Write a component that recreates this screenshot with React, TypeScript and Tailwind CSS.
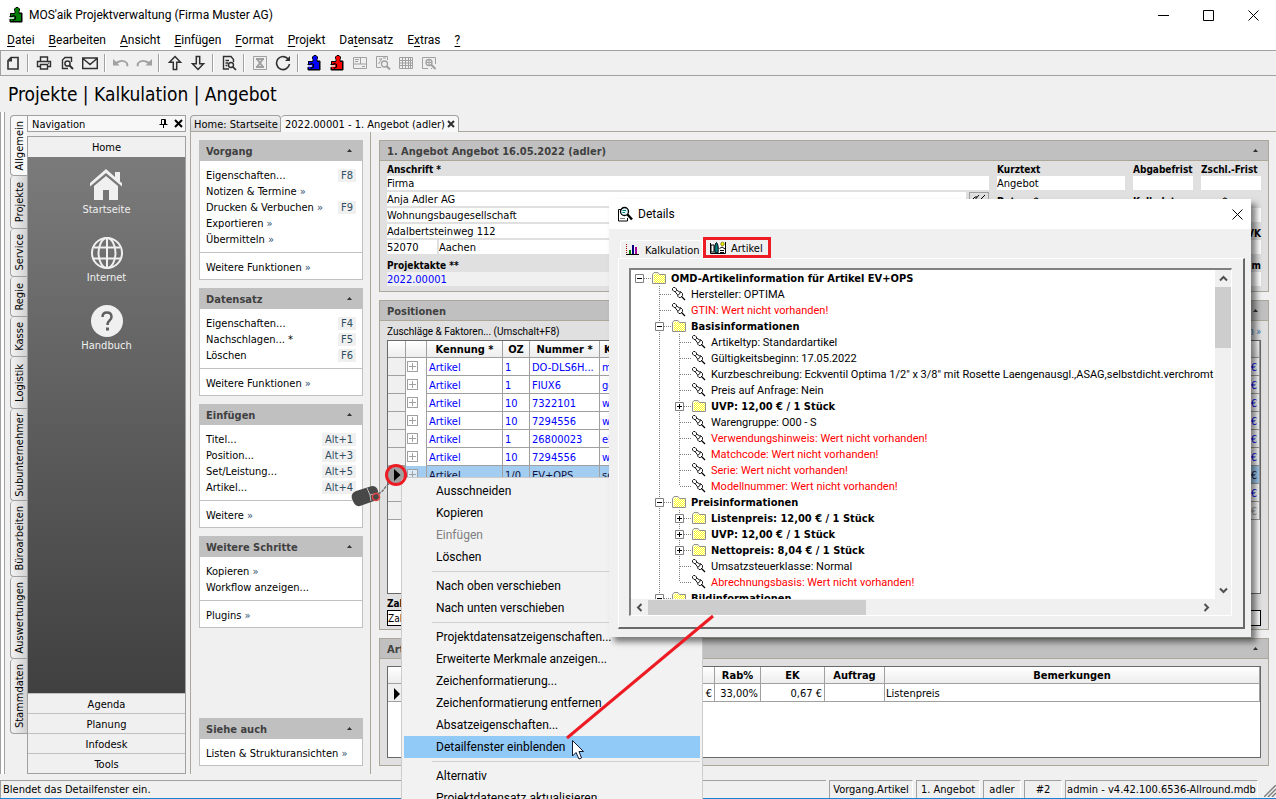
import type { ReactNode } from "react";

const menus = [
  ["", "D", "atei"],
  ["", "B", "earbeiten"],
  ["", "A", "nsicht"],
  ["", "E", "infügen"],
  ["", "F", "ormat"],
  ["", "P", "rojekt"],
  ["Da", "t", "ensatz"],
  ["E", "x", "tras"],
  ["", "?", ""],
];

const sideTabs = [
  { name: "Allgemein", size: "h-[61px]" },
  { name: "Projekte", size: "h-[53px]" },
  { name: "Service", size: "h-[48px]" },
  { name: "Regie", size: "h-[40px]" },
  { name: "Kasse", size: "h-[40px]" },
  { name: "Logistik", size: "h-[52px]" },
  { name: "Subunternehmer", size: "h-[92px]" },
  { name: "Büroarbeiten", size: "h-[76px]" },
  { name: "Auswertungen", size: "h-[82px]" },
  { name: "Stammdaten", size: "h-[75px]" },
];

type Task = { text: string; more?: boolean; hotkey?: string };

const taskGroups: { title: string; items: Task[]; footer?: string }[] = [
  {
    title: "Vorgang",
    items: [
      { text: "Eigenschaften...", hotkey: "F8" },
      { text: "Notizen & Termine", more: true },
      { text: "Drucken & Verbuchen", more: true, hotkey: "F9" },
      { text: "Exportieren", more: true },
      { text: "Übermitteln", more: true },
    ],
    footer: "Weitere Funktionen",
  },
  {
    title: "Datensatz",
    items: [
      { text: "Eigenschaften...", hotkey: "F4" },
      { text: "Nachschlagen... *", hotkey: "F5" },
      { text: "Löschen", hotkey: "F6" },
    ],
    footer: "Weitere Funktionen",
  },
  {
    title: "Einfügen",
    items: [
      { text: "Titel...", hotkey: "Alt+1" },
      { text: "Position...", hotkey: "Alt+3" },
      { text: "Set/Leistung...", hotkey: "Alt+5" },
      { text: "Artikel...", hotkey: "Alt+4" },
    ],
    footer: "Weitere",
  },
  {
    title: "Weitere Schritte",
    items: [{ text: "Kopieren", more: true }, { text: "Workflow anzeigen..." }],
    footer: "Plugins",
  },
];

const positions = [
  { kind: "Artikel", oz: "1", nr: "DO-DLS6H...", text: "mit Rahmen" },
  { kind: "Artikel", oz: "1", nr: "FIUX6", text: "geräuscharm" },
  { kind: "Artikel", oz: "10", nr: "7322101", text: "weiß" },
  { kind: "Artikel", oz: "10", nr: "7294556", text: "weiß" },
  { kind: "Artikel", oz: "1", nr: "26800023", text: "elektrisch" },
  { kind: "Artikel", oz: "10", nr: "7294556", text: "weiß" },
  { kind: "Artikel", oz: "1/0", nr: "EV+OPS", text: "schwarz", selected: true },
  {},
  { empty: true },
];

const contextMenu = [
  ["Ausschneiden", "Kopieren", "Einfügen", "Löschen"],
  ["Nach oben verschieben", "Nach unten verschieben"],
  [
    "Projektdatensatzeigenschaften...",
    "Erweiterte Merkmale anzeigen...",
    "Zeichenformatierung...",
    "Zeichenformatierung entfernen",
    "Absatzeigenschaften...",
    "Detailfenster einblenden",
  ],
  ["Alternativ", "Projektdatensatz aktualisieren"],
];

type Node = {
  depth: number;
  text: string;
  box?: "open" | "closed";
  missing?: boolean;
  last?: boolean;
};

const tree: Node[] = [
  { depth: 0, text: "OMD-Artikelinformation für Artikel EV+OPS", box: "open" },
  { depth: 1, text: "Hersteller: OPTIMA" },
  { depth: 1, text: "GTIN: Wert nicht vorhanden!", missing: true },
  { depth: 1, text: "Basisinformationen", box: "open" },
  { depth: 2, text: "Artikeltyp: Standardartikel" },
  { depth: 2, text: "Gültigkeitsbeginn: 17.05.2022" },
  { depth: 2, text: 'Kurzbeschreibung: Eckventil Optima 1/2" x 3/8" mit Rosette Laengenausgl.,ASAG,selbstdicht.verchromt' },
  { depth: 2, text: "Preis auf Anfrage: Nein" },
  { depth: 2, text: "UVP: 12,00 € / 1 Stück", box: "closed" },
  { depth: 2, text: "Warengruppe: O00 - S" },
  { depth: 2, text: "Verwendungshinweis: Wert nicht vorhanden!", missing: true },
  { depth: 2, text: "Matchcode: Wert nicht vorhanden!", missing: true },
  { depth: 2, text: "Serie: Wert nicht vorhanden!", missing: true },
  { depth: 2, text: "Modellnummer: Wert nicht vorhanden!", missing: true, last: true },
  { depth: 1, text: "Preisinformationen", box: "open" },
  { depth: 2, text: "Listenpreis: 12,00 € / 1 Stück", box: "closed" },
  { depth: 2, text: "UVP: 12,00 € / 1 Stück", box: "closed" },
  { depth: 2, text: "Nettopreis: 8,04 € / 1 Stück", box: "closed" },
  { depth: 2, text: "Umsatzsteuerklasse: Normal" },
  { depth: 2, text: "Abrechnungsbasis: Wert nicht vorhanden!", missing: true, last: true },
  { depth: 1, text: "Bildinformationen", box: "open" },
];

function Icon({ children, className = "size-4" }: { children: ReactNode; className?: string }) {
  return (
    <svg viewBox="0 0 16 16" fill="none" stroke="currentColor" className={`${className} shrink-0`}>
      {children}
    </svg>
  );
}

function Puzzle({ color }: { color: string }) {
  return (
    <Icon>
      <path d="M7 6V4.500L6.500 3.500V2L8 .5H10L11.500 2V3.500L11 4.500V6H14V15H2V12" fill={color} stroke="#000" />
      <path d="M2 6H14V15H2Z" fill={color} stroke="none" />
      <path d="M7 6.500H2.500V9M11 6.500H13.500V14.500H2.500V12.500" stroke="#000" />
      <path d="M1.500 9.500H4.500L5.500 8.500L7.500 9.500V12L5.500 13L4.500 12.500" stroke="#000" strokeWidth="1.200" />
      <path d="M1 11H6" stroke="#f0f0f0" strokeWidth="1.500" />
    </Icon>
  );
}

const toolIcons: Record<string, ReactNode> = {
  Neu: (
    <Icon>
      <path d="M6 2.500H13V14H3V5.500Z" strokeWidth="1.600" />
      <path d="M3 6.500L7 2.500V6.500Z" fill="currentColor" stroke="none" />
    </Icon>
  ),
  Drucken: (
    <Icon>
      <path d="M4.500 6V2H11.500V6M4.500 11.500H1.500V6.500H14.500V11.500H11.500M4.500 9.500H11.500V14H4.500Z" strokeWidth="1.400" />
      <path d="M12 8.200H13.200" />
    </Icon>
  ),
  Seitenansicht: (
    <Icon>
      <path d="M12.500 7V2.500H6L3.500 5V13.500H9" strokeWidth="1.400" />
      <circle cx="8.500" cy="8.500" r="2.600" strokeWidth="1.500" />
      <path d="M10.500 10.500L14 14" strokeWidth="2" />
    </Icon>
  ),
  Senden: (
    <Icon>
      <path d="M.7 3H15.300V13.500H.7ZM1 3.500L8 9.500L15 3.500" strokeWidth="1.500" />
    </Icon>
  ),
  Rückgängig: (
    <Icon>
      <path d="M0 4V10.500H6.500L4.500 8.500Q9 5 13 8.200L13.500 11.500L15.500 11L15 8Q10.500 2.500 3 6.800Z" fill="currentColor" stroke="none" />
    </Icon>
  ),
  Wiederholen: (
    <Icon>
      <path d="M16 4V10.500H9.500L11.500 8.500Q7 5 3 8.200L2.500 11.500L.5 11L1 8Q5.500 2.500 13 6.800Z" fill="currentColor" stroke="none" />
    </Icon>
  ),
  "Nach oben": (
    <Icon>
      <path d="M8 1.500L13.500 7.200H9.700V14.500H6.300V7.200H2.500Z" strokeWidth="1.500" />
    </Icon>
  ),
  "Nach unten": (
    <Icon>
      <path d="M8 14.500L13.500 8.800H9.700V1.500H6.300V8.800H2.500Z" strokeWidth="1.500" />
    </Icon>
  ),
  Suchen: (
    <Icon>
      <path d="M12.500 7V4.500L10 1.500H2.500V14H8M4.500 5.500H8M4.500 8H7M4.500 10.500H6.500" strokeWidth="1.400" />
      <circle cx="10" cy="10" r="2.500" strokeWidth="1.400" />
      <path d="M11.800 11.800L15 15" strokeWidth="1.700" />
    </Icon>
  ),
  Abbrechen: (
    <Icon>
      <path d="M1.500 1.500H14.500V14.500H1.500Z" />
      <path d="M4 4H12M4 12H12M5 4L11 12M11 4L5 12" strokeWidth="2" />
    </Icon>
  ),
  Aktualisieren: (
    <Icon>
      <path d="M13.500 4.500A6.500 6.500 0 1 0 14.500 9" strokeWidth="1.600" />
      <path d="M15 1V6H10Z" fill="currentColor" stroke="none" />
    </Icon>
  ),
  Stammdaten: <Puzzle color="#0000ff" />,
  Positionen: <Puzzle color="#ff0000" />,
  Formular: (
    <Icon>
      <path d="M1.500 2.500H14.500V13.500H1.500ZM1.500 9H14.500M8.500 2.500V9M3 4.500H7M3 6.500H6M10 11.500H13" />
    </Icon>
  ),
  Auswerten: (
    <Icon>
      <path d="M12.500 5V1.500H1.500V12.500H6M3.500 9L7 3.500M4 4H7M8 3H11" />
      <circle cx="9.500" cy="9" r="3" strokeWidth="1.300" />
      <path d="M11.700 11.200L15 14.500" strokeWidth="2" />
    </Icon>
  ),
  Tabelle: (
    <Icon>
      <path d="M1.500 2.500H14.500V13.500H1.500ZM1.500 5.500H14.500M1.500 8H14.500M1.500 10.500H14.500M4.500 2.500V13.500M7.500 2.500V13.500M10.500 2.500V13.500M12.500 2.500V13.500" />
    </Icon>
  ),
  Vorschau: (
    <Icon>
      <path d="M14.500 9V2.500H1.500V13.500H7M10 13.500H11" />
      <circle cx="8" cy="7.500" r="3" strokeWidth="1.300" />
      <path d="M8 5V10M5.500 7.500H10.500" />
      <path d="M10.200 9.700L14.500 14" strokeWidth="2" />
    </Icon>
  ),
};

const toolbar = [
  ["Neu"],
  ["Drucken", "Seitenansicht", "Senden"],
  ["Rückgängig", "Wiederholen"],
  ["Nach oben", "Nach unten"],
  ["Suchen"],
  ["Abbrechen", "Aktualisieren"],
  ["Stammdaten", "Positionen", "Formular", "Auswerten", "Tabelle", "Vorschau"],
];

const disabledTools = ["Rückgängig", "Wiederholen", "Abbrechen", "Formular", "Auswerten", "Tabelle", "Vorschau"];

function TitleBar() {
  return (
    <header className="flex h-[30px] shrink-0 items-center bg-white pl-2 font-[Roboto,sans-serif] text-[12px]">
      <Puzzle color="#008000" />
      <h1 className="ml-[5px]">MOS'aik Projektverwaltung (Firma Muster AG)</h1>
      <div className="ml-auto flex">
        <button aria-label="Minimieren" className="flex w-[45px] justify-center">
          <svg viewBox="0 0 11 11" className="size-[11px]" stroke="#000"><path d="M0 5.500H11" /></svg>
        </button>
        <button aria-label="Maximieren" className="flex w-[45px] justify-center">
          <svg viewBox="0 0 11 11" className="size-[11px]" stroke="#000" fill="none"><path d="M.5 .5H10.500V10.500H.5Z" /></svg>
        </button>
        <button aria-label="Schließen" className="flex w-[45px] justify-center">
          <svg viewBox="0 0 11 11" className="size-[11px]" stroke="#000"><path d="M.5 .5L10.500 10.500M10.500 .5L.5 10.500" /></svg>
        </button>
      </div>
    </header>
  );
}

function Toolbar() {
  return (
    <div className="flex h-[26px] shrink-0 items-center border-y border-l border-[#a0a0a0] bg-[#f0f0f0] text-[#303030]">
      {toolbar.map((group, i) => (
        <div key={i} className="flex items-center">
          {i > 0 && <span className="mx-[3px] h-[18px] w-0.5 border-l border-[#a0a0a0] bg-white" />}
          {group.map((name) => (
            <button
              key={name}
              aria-label={name}
              disabled={disabledTools.includes(name)}
              className="flex w-[23px] justify-center disabled:text-[#a0a0a0]"
            >
              {toolIcons[name]}
            </button>
          ))}
        </div>
      ))}
    </div>
  );
}

function Navigation() {
  return (
    <nav className="flex w-[159px] shrink-0 flex-col">
      <div className="flex h-[17px] shrink-0 items-center border border-[#a0a0a0] bg-[#f8f8f8] pr-0.5 pl-1">
        <h2 className="pt-px">Navigation</h2>
        <button aria-label="Anheften" className="ml-auto">
          <svg viewBox="0 0 9 9" className="size-[9px]" fill="none" stroke="#000"><path d="M2.500 5V.5H6.500V5M5.500 .5V5M.5 5.500H8.500M4.500 5.500V9" /></svg>
        </button>
        <button aria-label="Navigation schließen" className="ml-1.5">
          <svg viewBox="0 0 9 9" className="size-[9px]" stroke="#000" strokeWidth="2"><path d="M1 1L8 8M8 1L1 8" /></svg>
        </button>
      </div>
      <div className="mt-1 flex flex-1 flex-col border border-[#a0a0a0]">
        <button className="h-5 shrink-0">Home</button>
        <div className="flex flex-1 flex-col items-center gap-[19px] bg-linear-to-b from-[#7b7b7b] to-[#404040] pt-3 text-[#f0f0f0]">
          <a href="#start" className="flex flex-col items-center">
            <svg viewBox="0 0 32 32" className="size-8" fill="currentColor">
              <path d="M0 14L16 0L25 8V3H30V12.500L32 14V17.500L16 4L0 17.500Z" />
              <path d="M4 17L16 7L28 17V31H19V21H13V31H4Z" />
            </svg>
            <span className="leading-[17px]">Startseite</span>
          </a>
          <a href="#internet" className="flex flex-col items-center">
            <svg viewBox="0 0 32 32" className="size-8" fill="none" stroke="currentColor" strokeWidth="2">
              <circle cx="16" cy="16" r="15" />
              <ellipse cx="16" cy="16" rx="8.500" ry="15" />
              <path d="M16 1V31M3 10.500H29M3 21.500H29" />
            </svg>
            <span className="leading-[17px]">Internet</span>
          </a>
          <a href="#handbuch" className="flex flex-col items-center">
            <svg viewBox="0 0 32 32" className="size-8" fill="none">
              <circle cx="16" cy="16" r="16" fill="currentColor" />
              <path d="M11.500 12Q11.500 7.500 16 7.500T20.500 12Q20.500 14 18.500 15.500T16.500 20" stroke="#5f5f5f" strokeWidth="2.500" />
              <path d="M15 22.500H18V25.500H15Z" fill="#5f5f5f" />
            </svg>
            <span className="leading-[17px]">Handbuch</span>
          </a>
        </div>
        {["Agenda", "Planung", "Infodesk", "Tools"].map((name) => (
          <button key={name} className="h-5 shrink-0 border-t border-[#c0c0c0] pt-0.5">
            {name}
          </button>
        ))}
      </div>
    </nav>
  );
}

function Collapse() {
  return (
    <svg viewBox="0 0 5 3" className="h-[3px] w-[5px]" fill="#303030"><path d="M0 3L2.500 0L5 3Z" /></svg>
  );
}

function TaskGroup({ title, items, footer }: { title: string; items: Task[]; footer?: string }) {
  return (
    <section className="border border-t-0 border-[#c0c0c0] bg-white">
      <header className="flex h-[21px] items-center justify-between bg-[#c0c0c0] px-1.5 text-[#404040]">
        <h3 className="pt-0.5 font-bold">{title}</h3>
        <button aria-label={`${title} einklappen`} className="pr-1"><Collapse /></button>
      </header>
      <ul className={footer ? "px-1.5 pt-1.5 pb-[5px]" : "px-1.5 pt-1.5 pb-1"}>
        {items.map((item) => (
          <li key={item.text} className="flex h-4 items-center justify-between">
            <a href="#task">{item.text}{item.more && <span className="text-[#2f4f6f]"> »</span>}</a>
            {item.hotkey && <kbd className="bg-[#f0f0f0] px-[3px] font-[inherit] leading-[13px] text-[#2f4f5f]">{item.hotkey}</kbd>}
          </li>
        ))}
      </ul>
      {footer && (
        <div className="border-t border-[#c0c0c0] px-1.5 pt-1.5 pb-[3px] leading-[17px]">
          <a href="#more">{footer}<span className="text-[#2f4f6f]"> »</span></a>
        </div>
      )}
    </section>
  );
}

function Panel({ title, className, children }: { title: string; className?: string; children: ReactNode }) {
  return (
    <section className={`flex flex-col border border-[#aca899] bg-[#e0e0e0] ${className ?? ""}`}>
      <header className="flex h-5 shrink-0 items-center justify-between border-b border-[#aca899] bg-[#c0c0c0] pr-2.5 pl-[7px] text-[#404040]">
        <h2 className="pt-0.5 font-bold">{title}</h2>
        <button aria-label={`${title} einklappen`}><Collapse /></button>
      </header>
      {children}
    </section>
  );
}

function Field({ id, label, value, right }: { id: string; label: string; value?: string; right?: boolean }) {
  return (
    <div className="flex flex-col">
      <label
        htmlFor={id}
        className={`h-[15px] text-[10px] leading-[17px] font-bold whitespace-nowrap ${right ? "text-right" : ""}`}
      >
        {label}
      </label>
      <input id={id} defaultValue={value} className="h-3.5 w-full bg-white" />
    </div>
  );
}

function AddressPanel() {
  return (
    <Panel title="1. Angebot Angebot 16.05.2022 (adler)">
      <div className="grid grid-cols-[1fr_128px_60px_60px] gap-2 px-[7px] pb-[5px]">
        <div className="flex flex-col gap-[3px]">
          <div className="flex flex-col gap-0.5">
            <Field id="anschrift" label="Anschrift *" value="Firma" />
            <div className="flex gap-[3px]">
              <input aria-label="Name" defaultValue="Anja Adler AG" className="h-3.5 flex-1 bg-white" />
              <button aria-label="Adresse wählen" className="flex h-3.5 w-5 items-center justify-center border border-[#a0a0a0]">
                <Icon><path d="M2 11L8 4M7 11L14 4M2 8Q4 5 6 6M8 9Q11 11 14 9" /></Icon>
              </button>
            </div>
            <input aria-label="Zusatz" defaultValue="Wohnungsbaugesellschaft" className="h-3.5 bg-white" />
            <input aria-label="Straße" defaultValue="Adalbertsteinweg 112" className="h-3.5 bg-white" />
            <div className="flex gap-0.5">
              <input aria-label="PLZ" defaultValue="52070" className="h-3.5 w-[50px] bg-white" />
              <input aria-label="Ort" defaultValue="Aachen" className="h-3.5 flex-1 bg-white" />
            </div>
          </div>
          <div className="flex flex-col">
            <label htmlFor="akte" className="h-[15px] text-[10px] leading-[17px] font-bold">Projektakte **</label>
            <input id="akte" defaultValue="2022.00001" className="h-3.5 w-full bg-[#f0f0f0] text-[#0000ff]" />
          </div>
        </div>
        <div className="flex flex-col gap-[3px]">
          <Field id="kurztext" label="Kurztext" value="Angebot" />
          <Field id="datum" label="Datum *" />
        </div>
        <div className="flex flex-col gap-[3px]">
          <Field id="abgabe" label="Abgabefrist" />
          <Field id="kalk" label="Kalkulat." />
        </div>
        <div className="flex flex-col gap-[3px]">
          <Field id="zschl" label="Zschl.-Frist" />
          <Field id="von" label="von *" />
          <Field id="vk" label="VK" right />
          <Field id="summe" label="Netto m" right />
        </div>
      </div>
    </Panel>
  );
}

function PositionsPanel() {
  return (
    <Panel title="Positionen" className="min-h-0 flex-1">
      <div className="flex min-h-0 flex-1 flex-col px-[7px] pb-[3px]">
        <div className="flex h-[19px] shrink-0 items-center justify-between pt-0.5 font-[Roboto,sans-serif] text-[10px]">
          <a href="#faktoren">Zuschläge & Faktoren... (Umschalt+F8)</a>
          <a href="#funktionen" className="text-[#4080b0]">Funktionen »</a>
        </div>
        <div className="flex-1 overflow-hidden border border-[#696969] bg-white">
          <table className="w-full table-fixed border-separate border-spacing-0">
            <colgroup>
              <col className="w-[18px]" />
              <col className="w-[21px]" />
              <col className="w-[76px]" />
              <col className="w-[27px]" />
              <col className="w-[70px]" />
              <col />
              <col className="w-20" />
            </colgroup>
            <thead>
              <tr className="h-[17px] bg-linear-to-b from-white to-[#ececec]">
                {["", "", "Kennung *", "OZ", "Nummer *", "Kurztext", "Gesamt"].map((name, i) => (
                  <th key={i} className={`overflow-hidden border-r border-b border-[#a0a0a0] whitespace-nowrap ${i === 5 ? "pl-1 text-left" : ""}`}>{name}</th>
                ))}
              </tr>
            </thead>
            <tbody className="text-[#0000ff] [&_td]:border-r [&_td]:border-[#a0a0a0] [&_td]:pt-0.5 [&_td]:whitespace-nowrap">
              {positions.map((p, i) => (
                <tr key={i} className={p.selected ? "h-[18px] bg-[#a3cdf0] text-[#101040]" : "h-[18px]"}>
                  <td className={p.selected ? "border-b bg-[#a0a0a0]" : "border-b bg-[#f0f0f0]"} />
                  <td className="align-top">
                    <button aria-label="Aufklappen" className="mt-px ml-px flex size-[11px] items-center justify-center border border-[#a0a0a0] bg-white/60">
                      <svg viewBox="0 0 7 7" className="size-[7px]" stroke="#a0a0a0"><path d="M0 3.500H7M3.500 0V7" /></svg>
                    </button>
                  </td>
                  <td className="border-b pl-0.5">{p.kind}</td>
                  <td className="border-b pl-0.5">{p.oz}</td>
                  <td className="border-b pl-0.5">{p.nr}</td>
                  <td className="border-b pl-0.5">{p.text}</td>
                  <td className={p.empty ? "border-b pr-0.5 text-right text-[#a0a0a0]" : "border-b pr-0.5 text-right"}>€</td>
                </tr>
              ))}
            </tbody>
          </table>
        </div>
        <label htmlFor="zahlung" className="h-4 shrink-0 text-[10px] leading-[19px] font-bold">Zahl</label>
        <input id="zahlung" defaultValue="Zahl" className="h-4 shrink-0 border border-black bg-white text-[10px]" />
      </div>
    </Panel>
  );
}

function ArticlePanel() {
  return (
    <Panel title="Art">
      <div className="m-[7px] h-[92px] overflow-hidden border border-[#696969] bg-white">
        <table className="w-full table-fixed border-separate border-spacing-0">
          <colgroup>
            <col className="w-[18px]" />
            <col className="w-[229px]" />
            <col className="w-20" />
            <col className="w-[46px]" />
            <col className="w-[64px]" />
            <col className="w-[60px]" />
            <col />
          </colgroup>
          <thead>
            <tr className="h-[17px] bg-linear-to-b from-white to-[#ececec]">
              {["", "", "", "Rab%", "EK", "Auftrag", "Bemerkungen"].map((name, i) => (
                <th key={i} className="border-r border-b border-[#a0a0a0]">{name}</th>
              ))}
            </tr>
          </thead>
          <tbody className="[&_td]:border-r [&_td]:border-b [&_td]:border-[#a0a0a0] [&_td]:pt-0.5">
            <tr className="h-[18px]">
              <td className="bg-[#f0f0f0]">
                <svg viewBox="0 0 6 12" className="ml-1.5 h-3 w-1.5"><path d="M0 0L6 6L0 12Z" /></svg>
              </td>
              <td />
              <td className="pr-0.5 text-right">€</td>
              <td className="pr-0.5 text-right">33,00%</td>
              <td className="pr-0.5 text-right">0,67 €</td>
              <td />
              <td className="pl-px">Listenpreis</td>
            </tr>
          </tbody>
        </table>
      </div>
    </Panel>
  );
}

function StatusBar() {
  const cells = ["Vorgang.Artikel", "1. Angebot", "adler", "#2", "admin - v4.42.100.6536-Allround.mdb"];
  const widths = ["w-[84px]", "w-[64px]", "w-[38px]", "w-[38px]", "w-[193px]"];
  return (
    <footer className="mt-1.5 flex h-[19px] shrink-0 gap-[3px] border-b border-[#1883d7] pr-[18px] leading-[17px]">
      <span className="flex-1 border-t border-l border-[#a0a0a0] pl-0.5">Blendet das Detailfenster ein.</span>
      {cells.map((cell, i) => (
        <span key={cell} className={`${widths[i]} overflow-hidden border border-b-0 border-[#a0a0a0] border-r-white text-center whitespace-nowrap`}>
          {cell}
        </span>
      ))}
      <svg viewBox="0 0 12 12" className="absolute right-0 bottom-0.5 size-3" stroke="#808080" strokeWidth="1.500">
        <path d="M0 12L12 0M4 12L12 4M8 12L12 8" />
      </svg>
    </footer>
  );
}

function ContextMenu() {
  return (
    <div role="menu" className="absolute top-[477px] left-[401px] w-[302px] border border-[#ccc] bg-[#f2f2f2] p-0.5 font-[Roboto,sans-serif] text-[12px]">
      {contextMenu.map((group, i) => (
        <div key={i}>
          {i > 0 && <hr className="my-[3px] ml-[28px] border-t border-[#d0d0d0]" />}
          {group.map((name) => (
            <button
              key={name}
              role="menuitem"
              disabled={name === "Einfügen"}
              className={`block h-[22px] w-full pl-8 text-left whitespace-nowrap disabled:text-[#808080] ${name === "Detailfenster einblenden" ? "bg-[#91c9f7]" : ""}`}
            >
              {name}
            </button>
          ))}
        </div>
      ))}
    </div>
  );
}

function Folder() {
  return (
    <svg viewBox="0 0 15 13" className="h-[13px] w-[15px] shrink-0">
      <path d="M.5 11.500V2.500L2 .5H6L7.500 2.500H13.500V11.500Z" fill="#ffffe0" stroke="#909090" />
      <path d="M2 3.500H13M2 5.500H13M2 7.500H13M2 9.500H13" stroke="#ffff30" strokeDasharray="1 1" />
      <path d="M3 2.500H7M3 4.500H13M3 6.500H13M3 8.500H13M3 10.500H13" stroke="#ffff30" strokeDasharray="1 1" />
    </svg>
  );
}

function Pin() {
  return (
    <svg viewBox="0 0 14 14" className="size-3.5 shrink-0" fill="#fff" stroke="#000" strokeWidth=".9">
      <path d="M1.500 .5H3L4.500 2V3.500L3.500 4.500H2L.5 3V1.500Z" />
      <path d="M4.500 3L8.500 5.500M3 4.500L6 8.500" />
      <path d="M8.500 4.500L10.500 6.500V8.500L8.500 10.500H7L5.500 9L6.500 7.500L8 6.500Z" />
      <path d="M9.500 9.500L13 13" strokeWidth="1.200" />
    </svg>
  );
}

// Dotted guides of one tree column: the vertical run, the stub to the icon and the expander
function Guide({ own, box, top, bottom }: { own: boolean; box?: string; top: boolean; bottom: boolean }) {
  return (
    <svg viewBox="0 0 20 16" className="h-4 w-5 shrink-0" fill="none" stroke="#808080">
      {top && <path d="M8.500 0V8" strokeDasharray="1 1" />}
      {bottom && <path d="M8.500 8V16" strokeDasharray="1 1" />}
      {own && <path d="M9 8.500H20" strokeDasharray="1 1" />}
      {box && <path d="M4.500 4.500H12.500V12.500H4.500Z" fill="#fff" />}
      {box && <path d="M6 8.500H11" stroke="#000" />}
      {box === "closed" && <path d="M8.500 6V11" stroke="#000" />}
    </svg>
  );
}

function TreeRow({ node }: { node: Node }) {
  return (
    <li className={`flex h-4 items-center whitespace-nowrap ${node.box ? "font-bold" : "font-[Roboto,sans-serif]"} ${node.missing ? "text-[#ff0000]" : ""}`}>
      {Array.from({ length: node.depth + 1 }, (_, col) => {
        const own = col === node.depth;
        return (
          <Guide
            key={col}
            own={own}
            box={own ? node.box : undefined}
            top={col > 0}
            bottom={col > 0 && !(own && node.last)}
          />
        );
      })}
      <span className="ml-px mr-1 flex w-[15px]">{node.box ? <Folder /> : <Pin />}</span>
      {node.text}
    </li>
  );
}

function Chevron({ d }: { d: string }) {
  return (
    <svg viewBox="0 0 9 9" className="size-[9px]" fill="none" stroke="#505050" strokeWidth="2"><path d={d} /></svg>
  );
}

function DetailsDialog() {
  return (
    <div role="dialog" aria-label="Details" className="absolute top-[199px] left-[609px] flex h-[438px] w-[642px] flex-col bg-[#f0f0f0] shadow-[5px_5px_6px_rgba(0,0,0,0.5)]">
      <header className="flex h-[30px] shrink-0 items-center bg-white px-2 font-[Roboto,sans-serif] text-[12px]">
        <Icon>
          <path d="M1.500 3.500V15H10.500V12M1.500 3.500H4" fill="#fff" />
          <circle cx="7.500" cy="5.500" r="4" fill="#e0f8f8" strokeWidth="1.300" />
          <path d="M5.500 4.500H9M5.500 6.500H8" stroke="#008080" />
          <path d="M3 12.500H8" stroke="#808080" />
          <path d="M10.500 8.500L15 13.500" strokeWidth="2.500" />
        </Icon>
        <h2 className="ml-[5px]">Details</h2>
        <button aria-label="Details schließen" className="ml-auto">
          <svg viewBox="0 0 11 11" className="size-[11px]" stroke="#000"><path d="M.5 .5L10.500 10.500M10.500 .5L.5 10.500" /></svg>
        </button>
      </header>
      <div role="tablist" className="mt-2 flex h-[21px] shrink-0 items-end pl-[11px]">
        <button role="tab" className="flex h-[18px] w-[83px] items-center gap-[6px] rounded-t-sm border border-b-0 border-white pl-[5px]">
          <svg viewBox="0 0 13 11" className="h-[11px] w-[13px]">
            <path d="M.5 0V10" stroke="#a00000" strokeDasharray="1 1" />
            <path d="M0 10.500H13" stroke="#000" />
            <path d="M3 6H5V10H3Z" fill="#008000" />
            <path d="M6 1H8V10H6Z" fill="#000080" />
            <path d="M9 3H11V10H9Z" fill="#a000a0" />
          </svg>
          <span className="pt-0.5">Kalkulation</span>
        </button>
        <button role="tab" aria-selected="true" className="flex h-[21px] w-[68px] items-center gap-[5px] border-3 border-[#ed1c24] pl-1">
          <svg viewBox="0 0 16 14" className="h-3.5 w-4" stroke="#000" fill="none">
            <path d="M.5 2V12.500H15.500V1" fill="#fff" />
            <path d="M1 4H4V11H1Z" fill="#fff" />
            <path d="M5 12Q4 3 6.500 1.500Q9 4 8 12Z" fill="#008080" />
            <path d="M10 11.500H14M10 9.500H14M9.500 7.500L12 6L15 8" />
            <circle cx="12.500" cy="3" r="1.700" fill="#ffff00" stroke="#808000" />
          </svg>
          <span className="pt-0.5">Artikel</span>
        </button>
      </div>
      <div className="mx-[9px] mr-1.5 mb-2 flex min-h-0 flex-1 border border-white border-r-2 border-r-[#696969] border-b-2 border-b-[#696969] pt-[9px] pr-[11px] pb-[11px] pl-2.5">
        <div className="flex min-w-0 flex-1 flex-col border-t-2 border-r border-b border-l-2 border-[#808080] border-r-white border-b-white bg-white">
          <div className="flex min-h-0 flex-1">
            <ul className="min-w-0 flex-1 overflow-hidden">
              {tree.map((node, i) => (
                <TreeRow key={i} node={node} />
              ))}
            </ul>
            <div className="flex w-4 flex-col items-center bg-[#f0f0f0] pb-1">
              <span className="flex h-[17px] items-center"><Chevron d="M1 6.500L4.500 3L8 6.500" /></span>
              <span className="h-[61px] w-full bg-[#cdcdcd]" />
              <span className="mt-auto"><Chevron d="M1 2.500L4.500 6L8 2.500" /></span>
            </div>
          </div>
          <div className="flex h-4 shrink-0 items-center bg-[#f0f0f0] pr-5">
            <span className="flex w-[17px] justify-center"><Chevron d="M6.500 1L3 4.500L6.500 8" /></span>
            <span className="h-[15px] w-[218px] bg-[#cdcdcd]" />
            <span className="ml-auto"><Chevron d="M2.500 1L6 4.500L2.500 8" /></span>
          </div>
        </div>
      </div>
    </div>
  );
}

// Pointer marks laid over the windows
function Annotations() {
  return (
    <svg viewBox="0 0 360 300" className="pointer-events-none absolute top-[460px] left-[350px] h-[300px] w-[360px] overflow-visible" fill="none">
      <path d="M363 156L217 278" stroke="#ed1c24" strokeWidth="3" />
      <circle cx="46" cy="15" r="7.500" fill="#a0a0a0" />
      <path d="M44 9L50.500 15L44 21Z" fill="#000" />
      <circle cx="46" cy="15" r="9.500" stroke="#ed1c24" strokeWidth="3" />
      <path d="M28 34Q32 32 34 29T39 24" stroke="#707070" strokeWidth="1.500" strokeDasharray="3 1" />
      <path d="M3 41Q-1 34 6 31L22 26Q27 26 28 31L29 37Q29 40 24 41L10 46Q5 47 3 41Z" fill="#484848" />
      <path d="M17 28L20 35L28 33M20 35L21 41" stroke="#c0c0c0" />
      <circle cx="26" cy="37" r="3.500" stroke="#e04040" strokeWidth="1.500" />
      <path d="M222.500 280.500V296L226 292.500L229 299L231.500 298L229 291.500H233.500Z" fill="#fff" stroke="#101830" />
    </svg>
  );
}

export default function App() {
  return (
    <div className="relative flex h-screen flex-col overflow-hidden bg-[#f0f0f0] font-['DejaVu_Sans_Condensed','DejaVu_Sans',sans-serif] text-[11px] leading-[15px] text-black">
      <TitleBar />
      <nav className="flex h-5 shrink-0 items-center gap-3.5 bg-white pl-[7px] font-[Roboto,sans-serif] text-[12px]">
        {menus.map(([pre, key, post]) => (
          <a key={pre + key} href="#menu">{pre}<u className="underline-offset-2">{key}</u>{post}</a>
        ))}
      </nav>
      <Toolbar />
      <div className="flex h-9 shrink-0 items-center pl-2 text-[19px]">Projekte | Kalkulation | Angebot</div>

      <main className="flex min-h-0 flex-1">
        <div className="w-[5px] shrink-0 border-x border-[#a0a0a0] bg-white" />
        <div className="flex flex-1 pt-[3px]">
          <ul className="ml-[5px] flex w-[17px] shrink-0 flex-col">
            {sideTabs.map((tab, i) => (
              <li
                key={tab.name}
                className={`${tab.size} flex items-center justify-center rounded-l-[4px] border border-r-0 border-[#a0a0a0] ${i ? "border-t-0 bg-linear-to-r from-[#f4f4f4] to-[#d0d0d0]" : "bg-[#f8f8f8]"}`}
              >
                <a href="#tab" className="rotate-180 [writing-mode:vertical-rl]">{tab.name}</a>
              </li>
            ))}
          </ul>
          <Navigation />
          <div className="ml-1 flex min-w-0 flex-1 flex-col">
            <div className="flex h-[17px] shrink-0 border-b border-[#aca899]">
              <a href="#home" className="flex w-[91px] items-center rounded-t-sm border border-b-0 border-[#a0a0a0] bg-linear-to-b from-[#f0f0f0] to-[#d8d8d8] pt-px pl-[3px] whitespace-nowrap">
                Home: Startseite
              </a>
              <a href="#angebot" className="-mb-px flex w-[178px] items-center gap-0.5 rounded-t-sm border border-b-0 border-l-0 border-[#a0a0a0] bg-[#f8f8f8] pl-1 whitespace-nowrap">
                2022.00001 - 1. Angebot (adler)
                <svg viewBox="0 0 8 8" className="size-2" stroke="#303030" strokeWidth="2"><path d="M1 1L7 7M7 1L1 7" /></svg>
              </a>
            </div>
            <div className="flex min-h-0 flex-1">
              <aside className="flex w-[181px] shrink-0 flex-col gap-2 border-x border-[#aca899] py-2 pr-[7px] pl-2">
                {taskGroups.map((group) => (
                  <TaskGroup key={group.title} {...group} />
                ))}
                <div className="mt-auto">
                  <TaskGroup title="Siehe auch" items={[{ text: "Listen & Strukturansichten", more: true }]} />
                </div>
              </aside>
              <div className="flex min-w-0 flex-1 flex-col gap-2 py-2 pr-[7px] pl-2">
                <AddressPanel />
                <PositionsPanel />
                <ArticlePanel />
              </div>
            </div>
          </div>
        </div>
      </main>
      <StatusBar />
      <ContextMenu />
      <DetailsDialog />
      <Annotations />
    </div>
  );
}
